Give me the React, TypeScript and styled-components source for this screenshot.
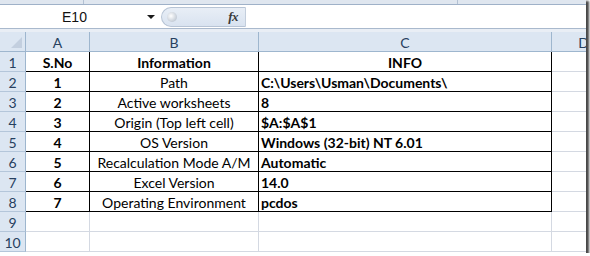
import React from 'react';
import styled, { createGlobalStyle } from 'styled-components';

const GlobalStyle = createGlobalStyle`
  html, body {
    margin: 0;
    padding: 0;
    background: #ffffff;
  }
  * {
    box-sizing: border-box;
  }
`;

const cellFont = `'Lato', 'Liberation Sans', sans-serif`;

const Frame = styled.div`
  width: 586px;
  height: 253px;
  overflow: hidden;
  background: #ffffff;
  box-shadow: 2px 2px 2px 1px rgba(40, 40, 40, 0.85);
  display: flex;
  flex-direction: column;
`;

const RibbonEdge = styled.div`
  height: 5px;
  background: #dfe6ef;
  border-bottom: 1px solid #9fb1c8;
  display: flex;
`;

const RibbonGroup = styled.div<{ $w: number }>`
  width: ${(p) => p.$w}px;
  border-right: 1px solid #b3c1d3;
`;

const FormulaBar = styled.div`
  height: 24px;
  display: flex;
  align-items: stretch;
  border-bottom: 1px solid #a9b9cd;
`;

const NameBox = styled.div`
  width: 161px;
  display: flex;
  align-items: center;
  padding: 0 6px 0 0;
  background: #ffffff;
`;

const NameText = styled.span`
  flex: 1;
  text-align: center;
  padding-left: 2px;
  font-family: 'Liberation Sans', sans-serif;
  font-size: 14px;
  color: #111111;
`;

const DropArrow = styled.span`
  width: 0;
  height: 0;
  border-left: 4px solid transparent;
  border-right: 4px solid transparent;
  border-top: 4px solid #1a1a1a;
`;

const FxPill = styled.div`
  width: 85px;
  margin: 2px 0 1px;
  display: flex;
  align-items: center;
  justify-content: space-between;
  padding: 0 7px 0 5px;
  background: linear-gradient(#e8eef6, #d9e3f0);
  border: 1px solid #b7c4d5;
  border-right: 1px solid #c3cedc;
  border-radius: 11px 0 0 11px;
`;

const Grip = styled.span`
  width: 10px;
  height: 10px;
  border-radius: 50%;
  background: radial-gradient(circle at 40% 40%, #ffffff, #c4ccd6 70%, #aab5c3);
`;

const FxLabel = styled.span`
  font-family: 'Liberation Serif', serif;
  font-style: italic;
  font-weight: bold;
  font-size: 13px;
  color: #3a3a3a;
  letter-spacing: -0.5px;
`;

const FormulaInput = styled.div`
  flex: 1;
  background: #ffffff;
`;

const Gap = styled.div`
  height: 3px;
  background: #e9eef5;
`;

const Sheet = styled.div`
  display: grid;
  grid-template-columns: 26px 64px 169px 293px 64px;
  grid-auto-rows: 20px;
`;

const Corner = styled.div`
  background: #dce6f2;
  border-right: 1px solid #9eb6ce;
  border-bottom: 1px solid #9eb6ce;
  position: relative;
  &::after {
    content: '';
    position: absolute;
    right: 3px;
    bottom: 3px;
    width: 0;
    height: 0;
    border-left: 11px solid transparent;
    border-bottom: 11px solid #c3cfdf;
  }
`;

const ColHead = styled.div`
  background: #dce6f2;
  border-right: 1px solid #9eb6ce;
  border-bottom: 1px solid #9eb6ce;
  display: flex;
  align-items: center;
  justify-content: center;
  padding-top: 2px;
  font-family: ${cellFont};
  font-size: 14px;
  color: #27405f;
  white-space: nowrap;
`;

const RowHead = styled(ColHead)`
  border-right: 1px solid #9eb6ce;
  border-bottom: 1px solid #b4c6da;
`;

const Cell = styled.div<{ $boxed?: boolean; $bold?: boolean; $center?: boolean }>`
  border-right: 1px solid ${(p) => (p.$boxed ? '#000000' : '#d4d9e2')};
  border-bottom: 1px solid ${(p) => (p.$boxed ? '#000000' : '#d4d9e2')};
  display: flex;
  align-items: center;
  justify-content: ${(p) => (p.$center ? 'center' : 'flex-start')};
  padding: 2px 2px 0;
  font-family: ${cellFont};
  font-size: 14px;
  font-weight: ${(p) => (p.$bold ? 700 : 400)};
  color: #000000;
  white-space: nowrap;
  overflow: hidden;
`;

const rows: [string, string, string][] = [
  ['S.No', 'Information', 'INFO'],
  ['1', 'Path', 'C:\\Users\\Usman\\Documents\\'],
  ['2', 'Active worksheets', '8'],
  ['3', 'Origin (Top left cell)', '$A:$A$1'],
  ['4', 'OS Version', 'Windows (32-bit) NT 6.01'],
  ['5', 'Recalculation Mode A/M', 'Automatic'],
  ['6', 'Excel Version', '14.0'],
  ['7', 'Operating Environment', 'pcdos'],
];

const App = () => {
  return (
    <>
      <GlobalStyle />
      <Frame>
        <RibbonEdge>
          <RibbonGroup $w={84} />
          <RibbonGroup $w={374} />
        </RibbonEdge>
        <FormulaBar>
          <NameBox>
            <NameText>E10</NameText>
            <DropArrow />
          </NameBox>
          <FxPill>
            <Grip />
            <FxLabel>fx</FxLabel>
          </FxPill>
          <FormulaInput />
        </FormulaBar>
        <Gap />
        <Sheet>
          <Corner />
          {['A', 'B', 'C', 'D'].map((c) => (
            <ColHead key={c}>{c}</ColHead>
          ))}
          {rows.map((r, i) => (
            <React.Fragment key={i}>
              <RowHead>{i + 1}</RowHead>
              <Cell $boxed $bold $center>
                {r[0]}
              </Cell>
              <Cell $boxed $bold={i === 0} $center>
                {r[1]}
              </Cell>
              <Cell $boxed $bold $center={i === 0}>
                {r[2]}
              </Cell>
              <Cell />
            </React.Fragment>
          ))}
          {[9, 10].map((n) => (
            <React.Fragment key={n}>
              <RowHead>{n}</RowHead>
              <Cell />
              <Cell />
              <Cell />
              <Cell />
            </React.Fragment>
          ))}
        </Sheet>
      </Frame>
    </>
  );
};

export default App;
